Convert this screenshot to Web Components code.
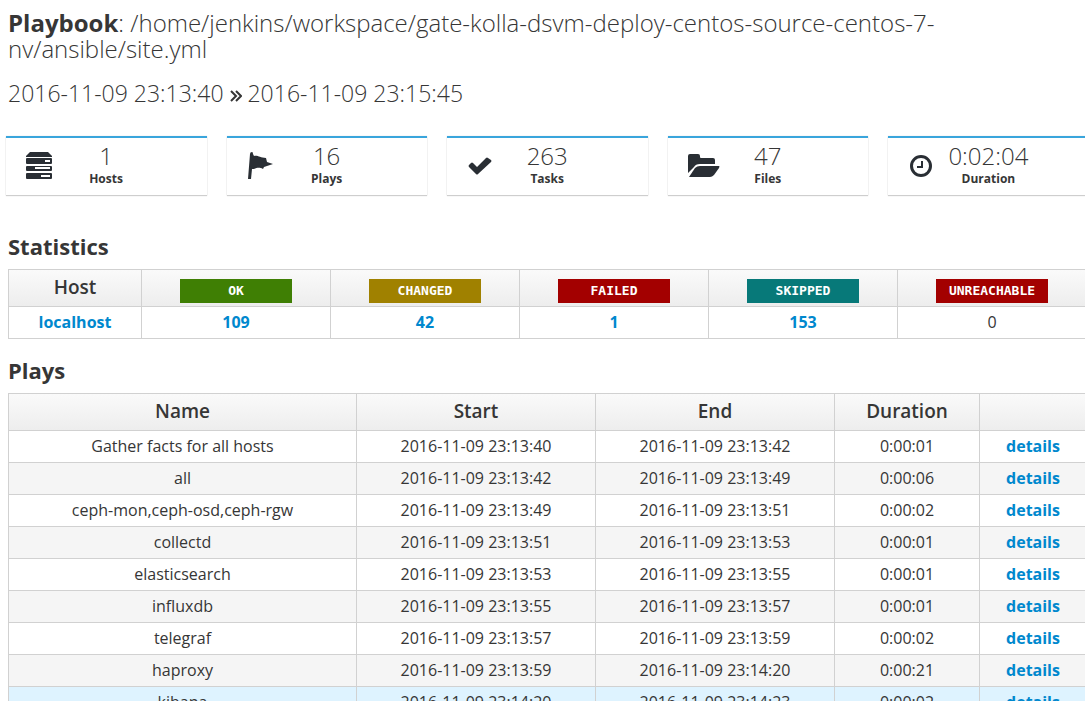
<!DOCTYPE html>
<html lang="en">
<head>
<meta charset="utf-8">
<title>Playbook report</title>
<style>
  html, body { margin: 0; overflow: hidden; background: #fff; }
  body { font: 16px/24px "Open Sans", "Noto Sans", sans-serif; color: #363636; }
</style>
</head>
<body>
<report-page>
  <report-header slot="header" start="2016-11-09 23:13:40" end="2016-11-09 23:15:45">/home/jenkins/workspace/gate-kolla-dsvm-deploy-centos-source-centos-7-nv/ansible/site.yml</report-header>
  <stat-card slot="card" label="Hosts" value="1">
    <svg width="26" height="28" viewBox="0 0 26 28" aria-hidden="true"><path fill="currentColor" d="M4 0h18l4 4v1H0V4z"/><path fill="currentColor" fill-rule="evenodd" d="M1 6h24q1 0 1 1v4q0 1-1 1H1q-1 0-1-1V7q0-1 1-1zm18 2v2h5V8zM1 14h24q1 0 1 1v3q0 1-1 1H1q-1 0-1-1v-3q0-1 1-1zm8 1v2h15v-2zM1 21h24q1 0 1 1v4q0 1-1 1H1q-1 0-1-1v-4q0-1 1-1zm14 2v2h9v-2z"/></svg>
  </stat-card>
  <stat-card slot="card" label="Plays" value="16">
    <svg width="26" height="28" viewBox="0 0 26 28" aria-hidden="true"><path fill="currentColor" d="M3 2q0-2 2-2 1 0 1 2l1 2c4-1 6 2 12 2l1 4 6 2-6 2-3 1-1 2c-4-2-6-1-9 0H5L4 27H1z"/></svg>
  </stat-card>
  <stat-card slot="card" label="Tasks" value="263">
    <svg width="26" height="28" viewBox="0 0 26 28" aria-hidden="true"><path fill="currentColor" d="M2 15q-1-1 0-2l2-2q1-1 2 0l4 4 9-9q1-1 2 0l3 2q1 1 0 2L11 22q-1 1-2 0z"/></svg>
  </stat-card>
  <stat-card slot="card" label="Files" value="47">
    <svg width="32" height="28" viewBox="0 0 32 28" aria-hidden="true"><path fill="currentColor" d="M0 21V4q0-2 2-2h8q2 0 2 2v1q0 1 1 1h12q2 0 2 2v4H12c-3 0-5 1-6 3z"/><path fill="currentColor" d="M2 25H1l6-9q2-2 5-2h19q1 0 0 2l-5 7q-2 2-4 2z"/></svg>
  </stat-card>
  <stat-card slot="card" label="Duration" value="0:02:04">
    <svg width="26" height="28" viewBox="0 0 26 28" aria-hidden="true"><circle cx="13" cy="14" r="9.5" fill="none" stroke="currentColor" stroke-width="3"/><path fill="none" stroke="currentColor" stroke-width="2" d="M14 9v6H9"/></svg>
  </stat-card>
  <report-section slot="section" heading="Statistics"><host-stats></host-stats></report-section>
  <report-section slot="section" heading="Plays"><play-list></play-list></report-section>
</report-page>

<script>
const tableCss = `
  :host { display: block; }
  table { width: 100%; border-collapse: collapse; table-layout: fixed; }
  th, td { border: 1px solid #d1d1d1; text-align: center; padding: 0; box-sizing: border-box; }
  thead tr { height: 37px; background: linear-gradient(#fafafa, #ededed); }
  tbody tr { height: 32px; }
  th { font-size: 19px; font-weight: 600; line-height: 34px; padding-bottom: 2px; }
  td { line-height: 30px; padding-bottom: 1px; }
  a { color: #0088ce; font-weight: 700; text-decoration: none; }
  a:hover { text-decoration: underline; }
`;

class BaseElement extends HTMLElement {
  connectedCallback() {
    if (!this.shadowRoot) this.attachShadow({ mode: 'open' }).innerHTML = this.render();
  }
}

customElements.define('report-page', class extends BaseElement {
  render() {
    return `<style>
      :host { display: block; }
      main { margin: 0 -2px 0 8px; padding-top: 10px; }
      .cards { display: grid; grid-template-columns: repeat(5, minmax(0, 1fr)); gap: 20px; margin: 30px -2px 37px; }
    </style>
    <main>
      <slot name="header"></slot>
      <div class="cards"><slot name="card"></slot></div>
      <slot name="section"></slot>
    </main>`;
  }
});

customElements.define('report-header', class extends BaseElement {
  render() {
    return `<style>
      :host { display: block; }
      h1, h2 { margin: 0; line-height: 26px; font-weight: 300; }
      h1 { padding-right: 40px; font-size: 24px; }
      h2 { margin-top: 18px; font-size: 23px; }
      b { font-weight: 700; }
    </style>
    <h1><b>Playbook</b>: <slot></slot></h1>
    <h2>${this.getAttribute('start')} <svg width="12" height="14" viewBox="0 0 12 14" role="img" aria-label="to"><path fill="none" stroke="currentColor" stroke-width="2" d="M1 3l5 5-5 5M6 3l5 5-5 5"/></svg> ${this.getAttribute('end')}</h2>`;
  }
});

customElements.define('stat-card', class extends BaseElement {
  render() {
    return `<style>
      :host { display: block; border-top: 2px solid #39a5dc; background: #fff; box-shadow: 0 1px 1px rgba(3,3,3,.175), 0 0 1px rgba(3,3,3,.15); }
      .body { display: grid; grid-template-columns: 60px 80px 1fr; height: 57px; }
      .icon { display: flex; padding: 14px 0 0 20px; color: #292e34; }
      .text { display: flex; flex-direction: column; align-items: center; }
      .value { font-size: 24px; line-height: 28px; font-weight: 300; padding-top: 4px; white-space: nowrap; }
      .label { font-size: 12px; line-height: 18px; font-weight: 700; }
    </style>
    <div class="body">
      <div class="icon"><slot></slot></div>
      <div class="text"><span class="value">${this.getAttribute('value')}</span><span class="label">${this.getAttribute('label')}</span></div>
    </div>`;
  }
});

customElements.define('report-section', class extends BaseElement {
  render() {
    return `<style>
      :host { display: block; margin-bottom: 17px; }
      h2 { margin: 0 0 9px; font-size: 22px; line-height: 28px; font-weight: 700; }
    </style>
    <h2>${this.getAttribute('heading')}</h2><slot></slot>`;
  }
});

customElements.define('status-badge', class extends BaseElement {
  render() {
    return `<style>
      :host { display: block; width: 112px; margin: 7px auto 0; background: var(--badge); color: #fff;
        font: 700 13px/24px "DejaVu Sans Mono", "Liberation Mono", monospace; }
    </style><slot></slot>`;
  }
});

customElements.define('host-stats', class extends BaseElement {
  render() {
    const states = [['OK', '#3f7f04', 109], ['CHANGED', '#a08100', 42], ['FAILED', '#a30000', 1], ['SKIPPED', '#077979', 153], ['UNREACHABLE', '#a30000', 0]];
    return `<style>${tableCss}
      col:first-child { width: 133px; }
    </style>
    <table>
      <colgroup><col><col><col><col><col><col></colgroup>
      <thead><tr><th scope="col">Host</th>${states.map(([n, c]) => `<th scope="col"><status-badge style="--badge:${c}">${n}</status-badge></th>`).join('')}</tr></thead>
      <tbody><tr><td><a href="#localhost">localhost</a></td>${states.map(([n, , v]) => `<td>${v ? `<a href="#${n.toLowerCase()}">${v}</a>` : v}</td>`).join('')}</tr></tbody>
    </table>`;
  }
});

customElements.define('play-list', class extends BaseElement {
  render() {
    const rows = [
      ['Gather facts for all hosts', '13:40', '13:42', '01'],
      ['all', '13:42', '13:49', '06'],
      ['ceph-mon,ceph-osd,ceph-rgw', '13:49', '13:51', '02'],
      ['collectd', '13:51', '13:53', '01'],
      ['elasticsearch', '13:53', '13:55', '01'],
      ['influxdb', '13:55', '13:57', '01'],
      ['telegraf', '13:57', '13:59', '02'],
      ['haproxy', '13:59', '14:20', '21'],
      ['kibana', '14:20', '14:23', '02', 'active']
    ];
    return `<style>${tableCss}
      .time { width: 239px; }
      .duration { width: 145px; }
      .link { width: 107px; }
      tbody tr:nth-child(even) { background: #f5f5f5; }
      tbody tr.active, tbody tr:hover { background: #def3ff; }
    </style>
    <table>
      <colgroup><col><col class="time"><col class="time"><col class="duration"><col class="link"></colgroup>
      <thead><tr><th scope="col">Name</th><th scope="col">Start</th><th scope="col">End</th><th scope="col">Duration</th><th></th></tr></thead>
      <tbody>${rows.map(([name, s, e, d, cls = '']) => `<tr class="${cls}"><td>${name}</td><td>2016-11-09 23:${s}</td><td>2016-11-09 23:${e}</td><td>0:00:${d}</td><td><a href="#${name.split(' ')[0]}">details</a></td></tr>`).join('')}</tbody>
    </table>`;
  }
});
</script>
</body>
</html>
